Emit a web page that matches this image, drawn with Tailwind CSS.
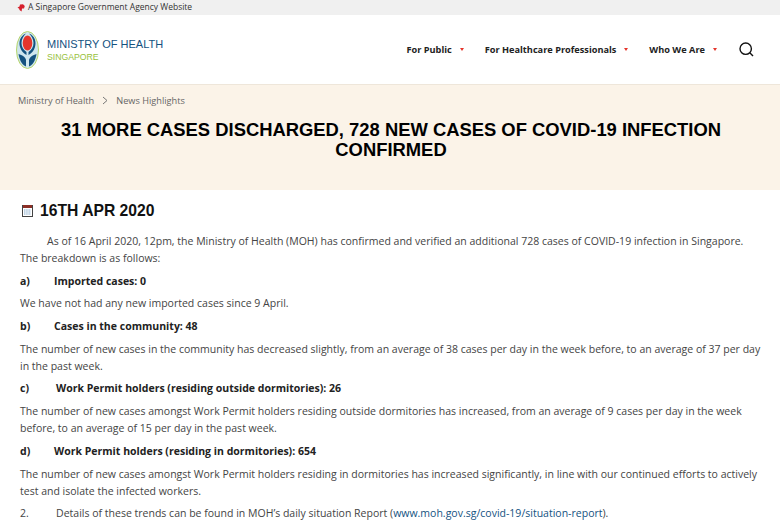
<!DOCTYPE html>
<html lang="en">
<head>
    <meta charset="UTF-8">
    <title>31 More Cases Discharged</title>
    <script src="https://cdn.jsdelivr.net/npm/@tailwindcss/browser@4"></script>
</head>
<body class="bg-white font-['Open_Sans',sans-serif] overflow-hidden h-[520px]">
    <div class="h-[15px] bg-[#f0f0f0] flex items-center pl-[17px] gap-[3px] text-[8.5px] text-[#333]">
        <svg width="8" height="8" viewBox="0 0 8 8"><path d="M0.5 3.5 L2.5 2.5 L3 0.5 L6 0.3 L7.8 2 L7 4.5 L5 4.6 L4.6 7.5 L2.5 6 L2.2 4.8Z" fill="#d6202c"/></svg>
        <span>A Singapore Government Agency Website</span>
    </div>
    <header class="h-[70px] flex items-center justify-between border-b border-[#eee6da]">
        <div class="flex items-center pl-4 gap-2">
            <svg width="23" height="38" viewBox="0 0 23 38">
                <ellipse cx="11.5" cy="19" rx="11" ry="18.5" fill="#cfe6ee" stroke="#b5d56a" stroke-width="1"/>
                <path d="M10 2.5 C4 5 2.5 11 4 16 C5 20 8 22.5 10.5 24 L10.5 21 C7.5 19 5.5 16 5.5 12 C5.5 8 7.5 5 10 2.5Z" fill="#14527f"/>
                <path d="M13 2.5 C19 5 20.5 11 19 16 C18 20 15 22.5 12.5 24 L12.5 21 C15.5 19 17.5 16 17.5 12 C17.5 8 15.5 5 13 2.5Z" fill="#14527f"/>
                <path d="M2.5 23 C6 24 9.5 26 10 29 L10 35.5 C6 34 3.5 29 2.5 23Z" fill="#14527f"/>
                <path d="M20.5 23 C17 24 13.5 26 13 29 L13 35.5 C17 34 19.5 29 20.5 23Z" fill="#14527f"/>
                <ellipse cx="11.5" cy="12" rx="4.8" ry="7.5" fill="#e5352b"/>
            </svg>
            <div class="font-['Liberation_Sans',sans-serif]">
                <div class="text-[11px] leading-[14px] text-[#14527f]">MINISTRY OF HEALTH</div>
                <div class="text-[8.7px] leading-[12px] text-[#97c13c]">SINGAPORE</div>
            </div>
        </div>
        <nav class="flex items-center text-[9.2px] font-bold text-[#222] pr-[26px]">
            <span>For Public</span>
            <span class="ml-[8px] border-x-[2.5px] border-t-[3px] border-x-transparent border-t-[#e5352b]"></span>
            <span class="ml-[21px]">For Healthcare Professionals</span>
            <span class="ml-[8px] border-x-[2.5px] border-t-[3px] border-x-transparent border-t-[#e5352b]"></span>
            <span class="ml-[21px]">Who We Are</span>
            <span class="ml-[8px] border-x-[2.5px] border-t-[3px] border-x-transparent border-t-[#e5352b]"></span>
            <svg class="ml-[22px]" width="15" height="15" viewBox="0 0 15 15" fill="none" stroke="#111" stroke-width="1.4"><circle cx="6.7" cy="6.7" r="5.7"/><path d="M10.8 10.8 L14 14"/></svg>
        </nav>
    </header>
    <section class="h-[105px] bg-[#fbf3e8] pt-[9px]">
        <div class="flex items-center pl-[18px] gap-[8px] text-[9.2px] text-[#666]">
            <span>Ministry of Health</span>
            <svg width="6" height="9" viewBox="0 0 6 9" fill="none" stroke="#777"><path d="M1 1 L5 4.5 L1 8"/></svg>
            <span>News Highlights</span>
        </div>
        <h1 class="mt-[12px] pl-[42px] pr-10 text-center font-['Liberation_Sans',sans-serif] font-bold text-[18.4px] leading-[20px] text-black">31 MORE CASES DISCHARGED, 728 NEW CASES OF COVID-19 INFECTION CONFIRMED</h1>
    </section>
    <main class="pl-5 pr-4 text-[10.53px] leading-[17px] text-[#444]">
        <div class="flex items-center gap-[7px] pl-[2px] pt-[12px] mb-[13px]">
            <svg class="-mt-[2px]" width="11" height="13" viewBox="0 0 11 13"><rect x="0.5" y="1.5" width="10" height="11" fill="#fff" stroke="#444"/><rect x="1" y="1" width="9" height="3" fill="#8c2f26"/><path d="M2 6h7M2 8h7M2 10h7" stroke="#7fa6c9" stroke-dasharray="1.5 0.7"/></svg>
            <h2 class="font-['Liberation_Sans',sans-serif] font-bold text-[15.7px] leading-[18px] text-[#111]">16TH APR 2020</h2>
        </div>
        <p class="indent-[27px] mb-[5.7px]">As of 16 April 2020, 12pm, the Ministry of Health (MOH) has confirmed and verified an additional 728 cases of COVID-19 infection in Singapore. The breakdown is as follows:</p>
        <p class="font-bold text-[#222] mb-[5.7px] flex"><span class="w-[34px]">a)</span>Imported cases: 0</p>
        <p class="mb-[5.7px]">We have not had any new imported cases since 9 April.</p>
        <p class="font-bold text-[#222] mb-[5.7px] flex"><span class="w-[34px]">b)</span>Cases in the community: 48</p>
        <p class="mb-[5.7px]">The number of new cases in the community has decreased slightly, from an average of 38 cases per day in the week before, to an average of 37 per day in the past week.</p>
        <p class="font-bold text-[#222] mb-[5.7px] flex"><span class="w-[36px]">c)</span>Work Permit holders (residing outside dormitories): 26</p>
        <p class="mb-[5.7px]">The number of new cases amongst Work Permit holders residing outside dormitories has increased, from an average of 9 cases per day in the week before, to an average of 15 per day in the past week.</p>
        <p class="font-bold text-[#222] mb-[5.7px] flex"><span class="w-[34px]">d)</span>Work Permit holders (residing in dormitories): 654</p>
        <p class="mb-[5.7px]">The number of new cases amongst Work Permit holders residing in dormitories has increased significantly, in line with our continued efforts to actively test and isolate the infected workers.</p>
        <p class="flex"><span class="w-[36px]">2.</span><span>Details of these trends can be found in MOH’s daily situation Report (<a class="text-[#14527f]" href="#">www.moh.gov.sg/covid-19/situation-report</a>).</span></p>
    </main>
</body>
</html>
